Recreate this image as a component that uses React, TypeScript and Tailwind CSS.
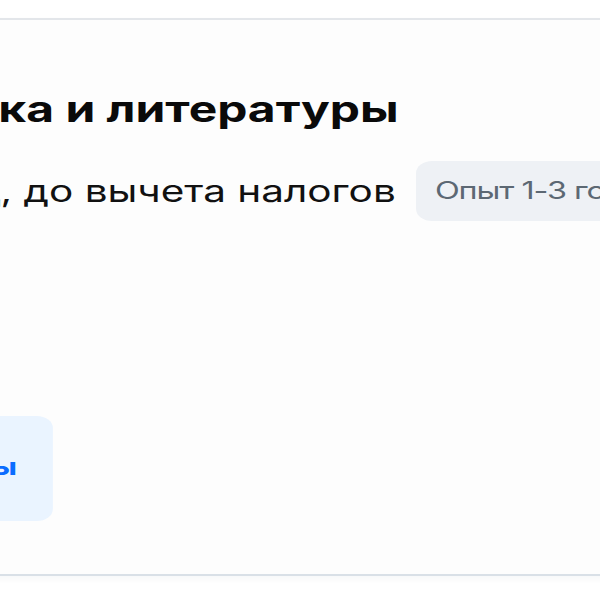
export default function App() {
  return (
    <div className="h-[600px] w-[600px] overflow-hidden bg-white pt-[18px] font-['Inter',sans-serif]">
      {/* Карточка вакансии */}
      <div className="-ml-[560px] w-[1800px] rounded-[24px] border-y-2 border-t-[#e3e6ea] border-b-[#d9e0e7] bg-[#fdfdfd] shadow-[0_3px_6px_rgba(20,40,70,0.04)]">
        <div className="origin-left scale-x-[1.35] pl-[21px] pt-[69px] pb-[53px]">
          <h1 className="whitespace-nowrap text-[35.5px] leading-[42px] font-bold text-[#0a0a0a]">
            Учитель русского языка и литературы
          </h1>

          <div className="mt-[30px] flex h-[60px] items-center">
            <span className="whitespace-nowrap text-[30px] leading-[36px] text-[#111]">
              10 000 – 15 000 ₽ за месяц, до вычета налогов
            </span>
            <span className="ml-[15px] flex h-[60px] items-center whitespace-nowrap rounded-[12px] bg-[#eef1f5] pl-[14px] pr-[13px] text-[24px] tracking-[-0.8px] text-[#5c6873]">
              Опыт 1-3 года
            </span>
          </div>

          {/* Кнопки */}
          <div className="mt-[195px] flex gap-[12px]">
            <button
              type="button"
              className="flex h-[105px] w-[251px] items-center justify-center rounded-[12px] bg-[#0070ff] pb-[4px] text-[24px] font-bold text-white"
            >
              Откликнуться
            </button>
            <button
              type="button"
              className="flex h-[105px] items-center rounded-[12px] bg-[#eaf4ff] px-[26px] pb-[4px] text-[24px] font-bold text-[#0a6cff]"
            >
              Контакты
            </button>
          </div>
        </div>
      </div>
    </div>
  );
}
